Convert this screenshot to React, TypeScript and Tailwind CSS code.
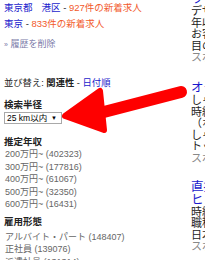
import React from 'react';

const FONT = { fontFamily: '"Liberation Sans", "Noto Sans CJK JP", sans-serif' };

const SALARY = [
    ['200万円~', '402323'],
    ['300万円~', '177816'],
    ['400万円~', '61067'],
    ['500万円~', '32350'],
    ['600万円~', '16431'],
];

const JOB_TYPES = [
    ['アルバイト・パート', '148407'],
    ['正社員', '139076'],
    ['派遣社員', '131314'],
];

function Arrow() {
    return (
        <svg className="absolute left-0 top-0 pointer-events-none" width="205" height="260" viewBox="0 0 205 260">
            <line x1="100" y1="113" x2="181" y2="92" stroke="#fe0000" strokeWidth="12" strokeLinecap="round" />
            <polygon
                points="65,116 100,91 104,130"
                fill="#fe0000"
                stroke="#fe0000"
                strokeWidth="6"
                strokeLinejoin="round"
            />
        </svg>
    );
}

export default function App() {
    return (
        <div className="relative w-[205px] h-[260px] overflow-hidden bg-white flex" style={FONT}>
            {/* left filter column */}
            <div className="w-[191px] shrink-0 pl-[4px] text-[9px] text-[#222]">
                <div className="leading-[16px] text-[9.5px] whitespace-nowrap">
                    <span className="text-[#1a1acc]">東京都</span>
                    <span className="inline-block w-[9px]" />
                    <span className="text-[#1a1acc]">港区</span>
                    <span className="text-[#222]"> - </span>
                    <span className="text-[#f2592a]">927件の新着求人</span>
                </div>
                <div className="leading-[16px] text-[9.5px] whitespace-nowrap">
                    <span className="text-[#1a1acc]">東京</span>
                    <span className="text-[#222]"> - </span>
                    <span className="text-[#f2592a]">833件の新着求人</span>
                </div>
                <div className="mt-[6px] leading-[12px] text-[#7a7aa8] whitespace-nowrap">
                    <span className="text-[7px]">»</span> 履歴を削除
                </div>

                <div className="mt-[26px] leading-[12px] text-[9.3px] whitespace-nowrap">
                    並び替え: <span className="font-bold">関連性</span> - <span className="text-[#1a1acc]">日付順</span>
                </div>

                <div className="mt-[10px] leading-[12px] text-[9.5px] font-bold">検索半径</div>
                <div className="mt-[1px] w-[58px] h-[12px] border border-[#a9a9a9] bg-white flex items-center justify-between pl-[2px] pr-[4px] text-[8.5px] leading-none text-black">
                    <span>25 km以内</span>
                    <span className="text-[6px]">▼</span>
                </div>

                <div className="mt-[12px] leading-[12px] text-[9.5px] font-bold">推定年収</div>
                <div className="flex flex-col">
                    {SALARY.map(([label, count]) => (
                        <div key={label} className="leading-[12.6px] text-[#666] pl-[1px] whitespace-nowrap">
                            {label} ({count})
                        </div>
                    ))}
                </div>

                <div className="mt-[5px] leading-[12px] text-[9.5px] font-bold">雇用形態</div>
                <div className="mt-[3px] flex flex-col">
                    {JOB_TYPES.map(([label, count]) => (
                        <div key={label} className="leading-[12.3px] text-[#666] pl-[1px] whitespace-nowrap">
                            {label} ({count})
                        </div>
                    ))}
                </div>
            </div>

            {/* results column, cut off by the window */}
            <div className="w-[200px] shrink-0 text-[11px] text-[#222] whitespace-nowrap">
                <div className="-mt-[7px] leading-[13px] text-[12.5px] text-[#1a1acc]">ワードプレス</div>
                <div className="leading-[11.5px]">デザイン事務所</div>
                <div className="leading-[11.5px]">年収 350万円</div>
                <div className="leading-[11.5px]">お客様のご要望</div>
                <div className="leading-[11.5px]">目の前の仕事</div>
                <div className="leading-[11.5px] text-[#888]">スポンサー</div>

                <div className="mt-[17.5px] leading-[14px] text-[12.5px] text-[#1a1acc]">オープニング</div>
                <div className="leading-[11.5px]">しゃぶ葉</div>
                <div className="leading-[11.5px]">時給 1000円</div>
                <div className="leading-[11.5px]">（ホール）</div>
                <div className="leading-[11.5px]">しゃぶしゃぶ</div>
                <div className="leading-[11.5px]">トッピング</div>
                <div className="leading-[11.5px] text-[#888]">スポンサー</div>

                <div className="mt-[16.5px] leading-[13px] text-[12.5px] text-[#1a1acc]">直接雇用</div>
                <div className="leading-[13px] text-[12.5px] text-[#1a1acc]">ヒューマン</div>
                <div className="leading-[11.5px]">時給 1500円</div>
                <div className="leading-[11.5px]">職種</div>
                <div className="leading-[11.5px]">日本橋</div>
                <div className="leading-[11.5px] text-[#888]">スポンサー</div>
            </div>

            <Arrow />
        </div>
    );
}
